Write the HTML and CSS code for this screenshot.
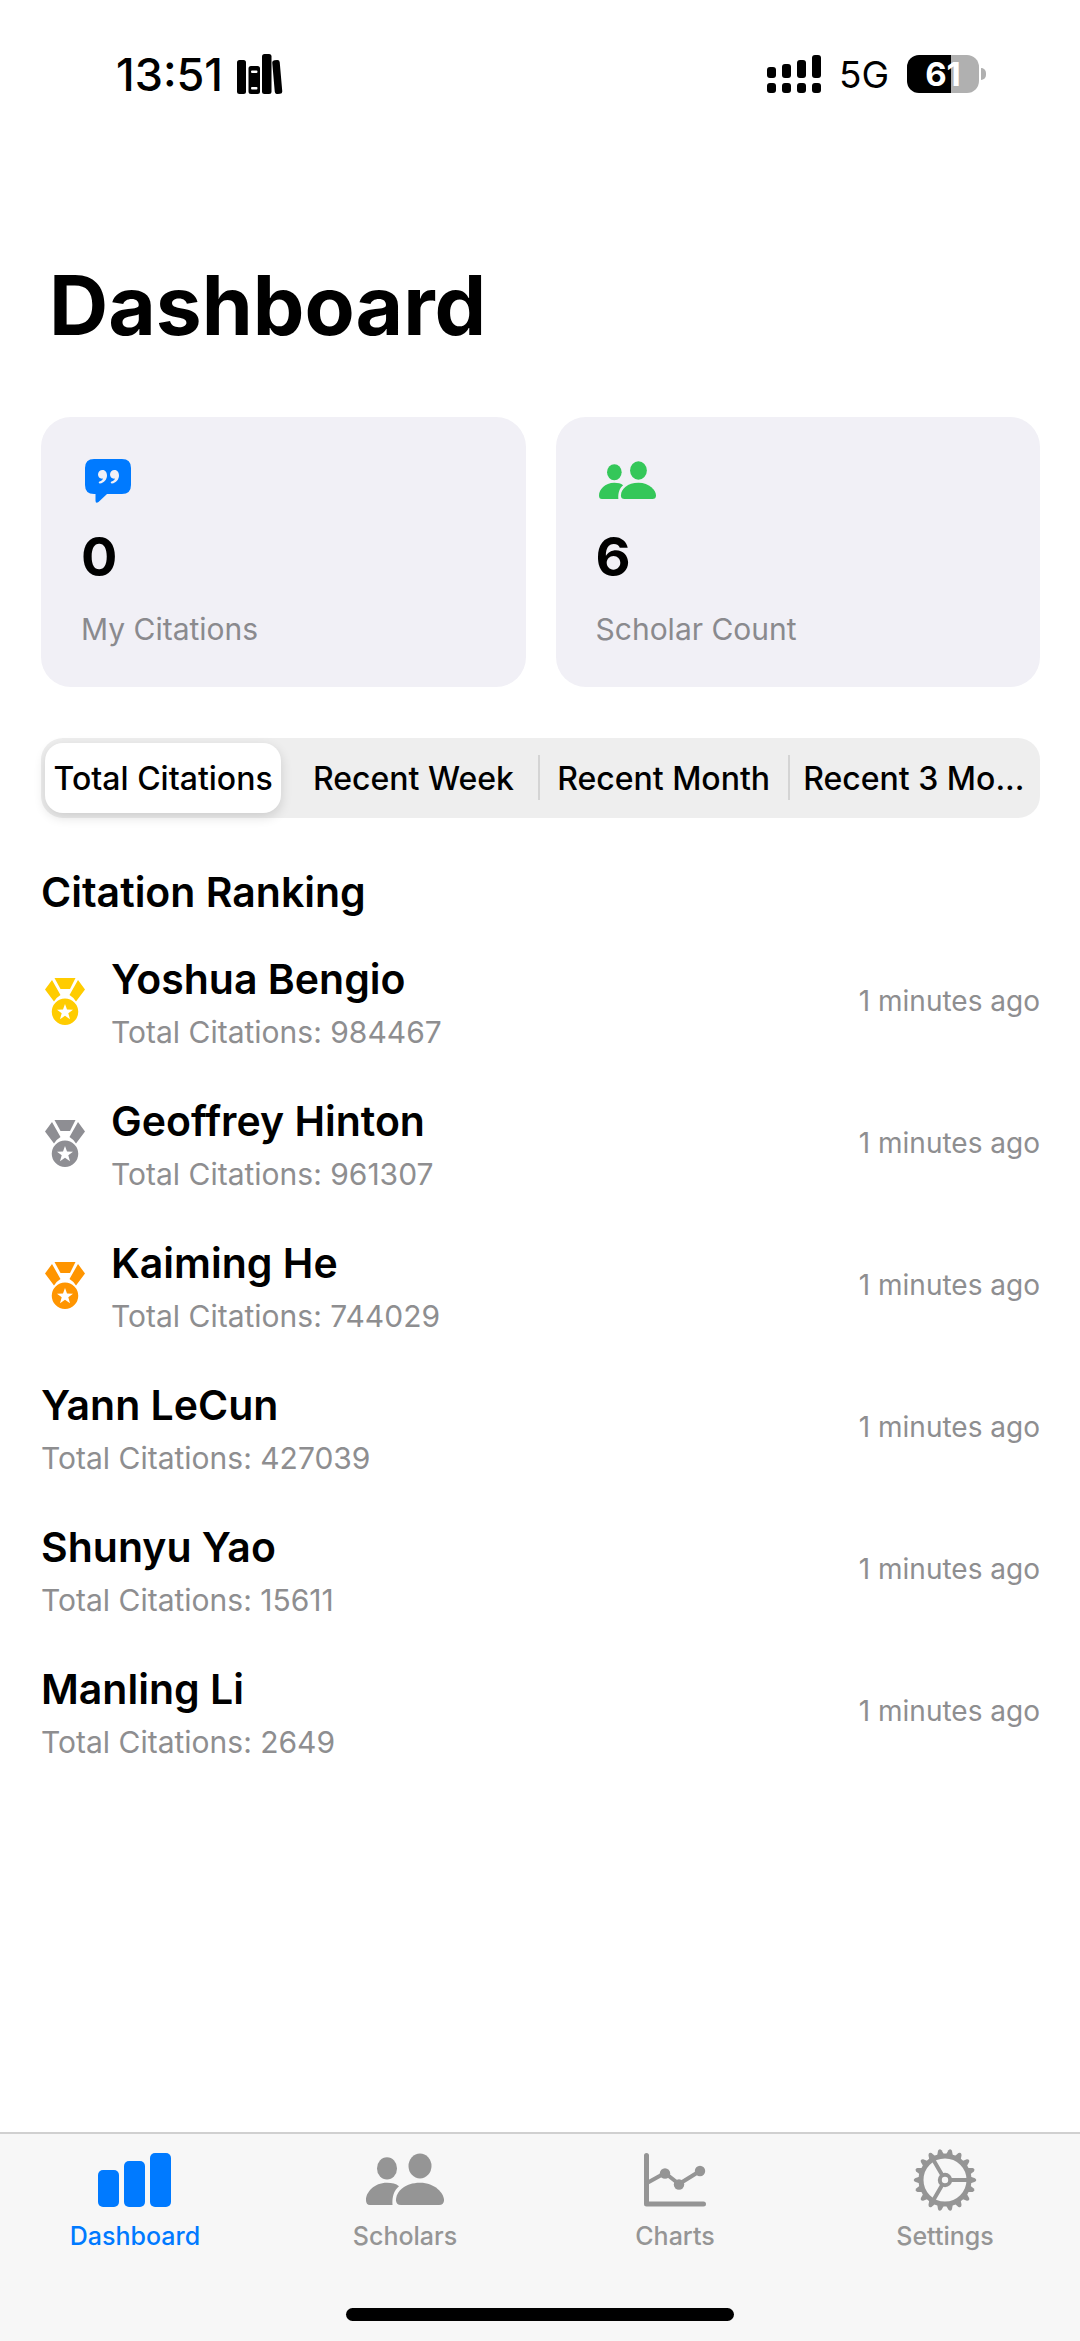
FILE: index.html
```html
<!DOCTYPE html>
<html lang="en">
<head>
    <meta charset="UTF-8">
    <meta name="viewport" content="width=device-width, initial-scale=1.0">
    <title>Dashboard</title>
    <link rel="stylesheet" href="styles.css">
</head>
<body>
    <!-- Shared icon shapes -->
    <svg class="sprite" aria-hidden="true">
        <symbol id="icon-people" viewBox="0 0 78 54" preserveAspectRatio="none">
            <ellipse cx="21" cy="16" rx="10" ry="11.500"/>
            <ellipse cx="54" cy="13.500" rx="11.500" ry="13"/>
            <path d="M30 49 C30 40 39 31 54 31 C69 31 78 42 78 49 Q78 54 73 54 H35 Q30 54 30 49Z"/>
            <path d="M0 49 C0 41 8 31 21 31 C26 31 30 32 33 34.500 C28 39 26 45 26.500 54 H4 Q0 54 0 49Z"/>
        </symbol>
        <symbol id="icon-medal" viewBox="0 0 40 47">
            <path d="M9.500 0 H30.500 L25 11 H15.500Z"/>
            <path d="M7 2 L15.500 17 Q12 19 9 23.500 L0 11.500Z"/>
            <path d="M33 2 L24.500 17 Q28 19 31 23.500 L40 11.500Z"/>
            <path fill-rule="evenodd" d="M20 20.500 A13.250 13.250 0 1 1 20 47 A13.250 13.250 0 1 1 20 20.500Z M20 26 L18 31.500 L12 31.700 L16.700 35.300 L15 41.200 L20 37.800 L25 41.200 L23.300 35.300 L28 31.700 L22 31.500Z"/>
        </symbol>
    </svg>

    <header class="status-bar">
        <div class="status-left">
            <span class="clock">13:51</span>
            <svg class="books" viewBox="0 0 46 40" aria-hidden="true">
                <rect x="0" y="6" width="9" height="34" rx="2.500"/>
                <path fill-rule="evenodd" d="M14 12 H20.500 Q23 12 23 14.500 V37.500 Q23 40 20.500 40 H14 Q11.500 40 11.500 37.500 V14.500 Q11.500 12 14 12Z M15 16.500 Q14 16.500 14 17.500 Q14 19 15 19 H19.500 Q20.500 19 20.500 17.500 Q20.500 16.500 19.500 16.500Z M15 33 Q14 33 14 34 Q14 35.500 15 35.500 H19.500 Q20.500 35.500 20.500 34 Q20.500 33 19.500 33Z"/>
                <rect x="25" y="0" width="9.500" height="40" rx="2.500"/>
                <rect x="36.500" y="6" width="7.500" height="34" rx="2.500" transform="rotate(-5 40 23)"/>
            </svg>
        </div>
        <div class="status-right">
            <svg class="signal" viewBox="0 0 54 38" aria-hidden="true">
                <rect x="0" y="12" width="9" height="11" rx="3"/>
                <rect x="15" y="9" width="9" height="14" rx="3"/>
                <rect x="30" y="5" width="9" height="18" rx="3"/>
                <rect x="45" y="0" width="9" height="23" rx="3"/>
                <rect x="0" y="28" width="9" height="10" rx="3"/>
                <rect x="15" y="28" width="9" height="10" rx="3"/>
                <rect x="30" y="28" width="9" height="10" rx="3"/>
                <rect x="45" y="28" width="9" height="10" rx="3"/>
            </svg>
            <span class="network">5G</span>
            <span class="battery"><span class="battery-level">61</span></span>
        </div>
    </header>

    <main class="container">
        <h1>Dashboard</h1>

        <section class="cards">
            <div class="card">
                <svg class="card-icon blue" viewBox="0 0 60 48" aria-hidden="true">
                    <path d="M13 2 H41 Q50 2 50 11 V28 Q50 37 41 37 H26 L17.500 45 Q14.500 47 14.500 43.500 V37 H13 Q4 37 4 28 V11 Q4 2 13 2Z"/>
                    <g class="quotes">
                        <path d="M21.500 13 C24.500 13 26 15.500 26 18.500 C26 22.500 23 26 19 26.500 C17.500 26.500 17.300 25 18.500 24.600 C20.500 24 21.600 23 22 21.600 C19 22.200 17 20 17 17.500 C17 15 19 13 21.500 13Z"/>
                        <path d="M33.500 13 C36.500 13 38 15.500 38 18.500 C38 22.500 35 26 31 26.500 C29.500 26.500 29.300 25 30.500 24.600 C32.500 24 33.600 23 34 21.600 C31 22.200 29 20 29 17.500 C29 15 31 13 33.500 13Z"/>
                    </g>
                </svg>
                <strong class="card-value">0</strong>
                <span class="card-label">My Citations</span>
            </div>
            <div class="card">
                <svg class="card-icon green" viewBox="0 0 60 48" aria-hidden="true">
                    <use href="#icon-people" x="3" y="4" width="57" height="38"/>
                </svg>
                <strong class="card-value">6</strong>
                <span class="card-label">Scholar Count</span>
            </div>
        </section>

        <div class="segments">
            <button type="button" class="segment active">Total Citations</button>
            <button type="button" class="segment">Recent Week</button>
            <button type="button" class="segment divided">Recent Month</button>
            <button type="button" class="segment divided">Recent 3 Mo...</button>
        </div>

        <h2>Citation Ranking</h2>
        <ul class="ranking">
            <li class="scholar">
                <svg class="medal gold" viewBox="0 0 40 47" aria-hidden="true"><use href="#icon-medal"/></svg>
                <div class="scholar-info">
                    <h3>Yoshua Bengio</h3>
                    <p>Total Citations: 984467</p>
                </div>
                <span class="updated">1 minutes ago</span>
            </li>
            <li class="scholar">
                <svg class="medal silver" viewBox="0 0 40 47" aria-hidden="true"><use href="#icon-medal"/></svg>
                <div class="scholar-info">
                    <h3>Geoffrey Hinton</h3>
                    <p>Total Citations: 961307</p>
                </div>
                <span class="updated">1 minutes ago</span>
            </li>
            <li class="scholar">
                <svg class="medal bronze" viewBox="0 0 40 47" aria-hidden="true"><use href="#icon-medal"/></svg>
                <div class="scholar-info">
                    <h3>Kaiming He</h3>
                    <p>Total Citations: 744029</p>
                </div>
                <span class="updated">1 minutes ago</span>
            </li>
            <li class="scholar">
                <div class="scholar-info">
                    <h3>Yann LeCun</h3>
                    <p>Total Citations: 427039</p>
                </div>
                <span class="updated">1 minutes ago</span>
            </li>
            <li class="scholar">
                <div class="scholar-info">
                    <h3>Shunyu Yao</h3>
                    <p>Total Citations: 15611</p>
                </div>
                <span class="updated">1 minutes ago</span>
            </li>
            <li class="scholar">
                <div class="scholar-info">
                    <h3>Manling Li</h3>
                    <p>Total Citations: 2649</p>
                </div>
                <span class="updated">1 minutes ago</span>
            </li>
        </ul>
    </main>

    <footer class="tab-bar">
        <nav class="tabs">
            <a href="#dashboard" class="tab active">
                <svg viewBox="0 0 80 66" aria-hidden="true">
                    <rect x="3" y="23" width="21" height="37" rx="5"/>
                    <rect x="29" y="14" width="21" height="46" rx="5"/>
                    <rect x="55" y="6" width="21" height="54" rx="5"/>
                </svg>
                <span>Dashboard</span>
            </a>
            <a href="#scholars" class="tab">
                <svg viewBox="0 0 80 66" aria-hidden="true">
                    <use href="#icon-people" x="1" y="6" width="78" height="52"/>
                </svg>
                <span>Scholars</span>
            </a>
            <a href="#charts" class="tab">
                <svg viewBox="0 0 80 66" aria-hidden="true">
                    <path class="line" d="M11.500 8.500 V57 H68.500"/>
                    <path class="line thin" d="M12 36 L30 26 L44 37 L65 24"/>
                    <circle cx="30" cy="26.500" r="5.200"/>
                    <circle cx="44" cy="37.500" r="5.200"/>
                    <circle cx="65" cy="24" r="5.200"/>
                </svg>
                <span>Charts</span>
            </a>
            <a href="#settings" class="tab">
                <svg viewBox="0 0 80 66" aria-hidden="true">
                    <circle class="line" cx="40" cy="33" r="24"/>
                    <circle class="line thin" cx="40" cy="33" r="5.200"/>
                    <path class="line thin" d="M46 33 H64 M37 27.800 L28 12.200 M37 38.200 L28 53.800"/>
                    <path id="tooth" d="M65 29.400 L70 31.200 Q72.500 33 70 34.800 L65 36.600Z"/>
                    <use href="#tooth" transform="rotate(20 40 33)"/>
                    <use href="#tooth" transform="rotate(40 40 33)"/>
                    <use href="#tooth" transform="rotate(60 40 33)"/>
                    <use href="#tooth" transform="rotate(80 40 33)"/>
                    <use href="#tooth" transform="rotate(100 40 33)"/>
                    <use href="#tooth" transform="rotate(120 40 33)"/>
                    <use href="#tooth" transform="rotate(140 40 33)"/>
                    <use href="#tooth" transform="rotate(160 40 33)"/>
                    <use href="#tooth" transform="rotate(180 40 33)"/>
                    <use href="#tooth" transform="rotate(200 40 33)"/>
                    <use href="#tooth" transform="rotate(220 40 33)"/>
                    <use href="#tooth" transform="rotate(240 40 33)"/>
                    <use href="#tooth" transform="rotate(260 40 33)"/>
                    <use href="#tooth" transform="rotate(280 40 33)"/>
                    <use href="#tooth" transform="rotate(300 40 33)"/>
                    <use href="#tooth" transform="rotate(320 40 33)"/>
                    <use href="#tooth" transform="rotate(340 40 33)"/>
                </svg>
                <span>Settings</span>
            </a>
        </nav>
        <div class="home-indicator"></div>
    </footer>
</body>
</html>
```
FILE: styles.css
```css
* {
    box-sizing: border-box;
}
body {
    margin: 0;
    min-height: 100vh;
    display: flex;
    flex-direction: column;
    background-color: #fff;
    color: #000;
    font-family: Inter, "Liberation Sans", sans-serif;
}
h1, h2, h3, p, ul {
    margin: 0;
    padding: 0;
}
svg {
    display: block;
    flex-shrink: 0;
    fill: currentColor;
}
.sprite {
    position: absolute;
    width: 0;
    height: 0;
}

/* Status bar */
.status-bar {
    display: flex;
    justify-content: space-between;
    align-items: center;
    height: 148px;
    padding: 0 94px 0 116px;
}
.status-left,
.status-right {
    display: flex;
    align-items: center;
}
.status-left {
    gap: 14px;
}
.status-right {
    gap: 18px;
}
.clock {
    font-size: 45px;
    font-weight: 500;
}
.books {
    width: 46px;
    height: 40px;
}
.signal {
    width: 54px;
    height: 38px;
}
.network {
    font-size: 37px;
}
.battery {
    position: relative;
    width: 72px;
    height: 38px;
    border-radius: 12px;
    background: linear-gradient(to right, #000 61%, #b0b0b0 61%);
    margin-right: 7px;
    text-align: center;
}
.battery::after {
    content: "";
    position: absolute;
    right: -7px;
    top: 13px;
    width: 5px;
    height: 12px;
    border-radius: 0 5px 5px 0;
    background-color: #b0b0b0;
}
.battery-level {
    color: #fff;
    font-size: 33px;
    font-weight: 700;
    line-height: 38px;
}

/* Page content */
.container {
    padding: 108px 40px 40px 41px;
}
h1 {
    padding-left: 8px;
    font-size: 82px;
    font-weight: 700;
    line-height: 100px;
}
.cards {
    display: grid;
    grid-template-columns: 1fr 1fr;
    gap: 30px;
    margin-top: 61px;
}
.card {
    display: flex;
    flex-direction: column;
    gap: 22px;
    padding: 40px 40px 38px;
    border-radius: 30px;
    background-color: #f1f0f6;
}
.card-icon {
    width: 60px;
    height: 48px;
}
.blue {
    color: #007aff;
}
.green {
    color: #34c759;
}
.quotes {
    fill: #f1f0f6;
}
.card-value {
    font-size: 54px;
    font-weight: 700;
    line-height: 60px;
}
.card-label {
    color: #8a8a8e;
    font-size: 30px;
    line-height: 40px;
}

/* Segmented control */
.segments {
    display: grid;
    grid-template-columns: repeat(4, minmax(0, 1fr));
    gap: 14px;
    margin-top: 51px;
    padding: 5px 8px 5px 4px;
    border-radius: 22px;
    background-color: #eee;
}
.segment {
    position: relative;
    height: 70px;
    padding: 0;
    border: none;
    border-radius: 18px;
    background: none;
    color: #000;
    font-family: inherit;
    font-size: 32px;
    font-weight: 500;
    white-space: nowrap;
    cursor: pointer;
}
.segment.active {
    background-color: #fff;
    box-shadow: 0 4px 12px rgba(0, 0, 0, 0.14);
}
.segment.divided::before {
    content: "";
    position: absolute;
    left: -8px;
    top: 12px;
    width: 2px;
    height: 45px;
    background-color: #d4d4d4;
}

/* Ranking list */
h2 {
    margin-top: 49px;
    font-size: 41px;
    font-weight: 600;
    line-height: 50px;
}
.ranking {
    display: flex;
    flex-direction: column;
    gap: 44px;
    margin-top: 37px;
    list-style: none;
}
.scholar {
    display: flex;
    align-items: center;
}
.medal {
    width: 40px;
    height: 47px;
    margin: 0 26px 4px 4px;
}
.gold {
    color: #fc0;
}
.silver {
    color: #8e8e93;
}
.bronze {
    color: #ff9500;
}
.scholar-info {
    flex: 1;
}
.scholar h3 {
    font-size: 41px;
    font-weight: 600;
    line-height: 50px;
}
.scholar p {
    margin-top: 8px;
    color: #8e8e90;
    font-size: 30px;
    line-height: 40px;
}
.updated {
    margin-bottom: 4px;
    color: #8e8e90;
    font-size: 28px;
}

/* Bottom tab bar */
.tab-bar {
    display: flex;
    flex-direction: column;
    align-items: center;
    margin-top: auto;
    padding-bottom: 20px;
    border-top: 2px solid #d0d0d0;
    background-color: #f7f7f7;
}
.tabs {
    display: grid;
    grid-template-columns: repeat(4, 1fr);
    width: 100%;
    padding-top: 13px;
}
.tab {
    display: flex;
    flex-direction: column;
    align-items: center;
    gap: 6px;
    color: #959595;
    font-size: 25px;
    font-weight: 500;
    line-height: 34px;
    text-decoration: none;
}
.tab.active {
    color: #007aff;
}
.tab svg {
    width: 80px;
    height: 66px;
}
.line {
    fill: none;
    stroke: currentColor;
    stroke-width: 5;
    stroke-linecap: round;
    stroke-linejoin: round;
}
.line.thin {
    stroke-width: 4;
}
.home-indicator {
    width: 36%;
    height: 13px;
    margin-top: 55px;
    border-radius: 7px;
    background-color: #000;
}
```
